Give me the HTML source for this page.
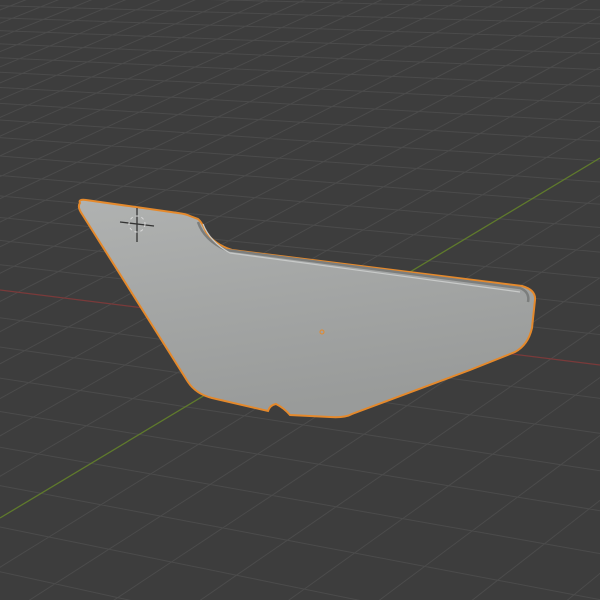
<!DOCTYPE html>
<html><head><meta charset="utf-8"><style>
html,body{margin:0;padding:0;background:#3d3d3d;width:600px;height:600px;overflow:hidden}
svg{display:block;position:absolute;left:0;top:0}
</style></head><body>
<svg id="s" width="600" height="600" viewBox="0 0 600 600" xmlns="http://www.w3.org/2000/svg">
<rect width="600" height="600" fill="#3d3d3d"/>
<g id="grid" stroke="#4b4b4b" stroke-width="1" fill="none"></g>
<line x1="0" y1="290" x2="600" y2="365" stroke="#7a3a3a" stroke-width="1.3"/>
<line x1="0" y1="518" x2="600" y2="158" stroke="#5f7a2c" stroke-width="1.3"/>
<defs>
<linearGradient id="g" x1="0" y1="0" x2="0.3" y2="1">
<stop offset="0" stop-color="#b0b2b1"/>
<stop offset="0.5" stop-color="#a4a6a5"/>
<stop offset="1" stop-color="#999b9a"/>
</linearGradient>
</defs>
<path d="M80 203 Q78 199 86 200 L178 213 Q186 214 190 216 L198 219 Q202 222 206 232 Q214 244 232 250 L522 286 Q536 290 535 300 L532 328 Q528 345 515 352 L470 370 L352 414 Q345 418 330 417 L290 415 Q284 408 276 404 Q270 405 268 411 L212 398 Q196 394 188 382 L82 214 Q77 207 80 203 Z" fill="url(#g)" stroke="#e4892c" stroke-width="2"/>
<path d="M198 222 Q204 240 226 250 L520 288 Q530 292 528 302" fill="none" stroke="#7c7e7d" stroke-width="2.5"/>
<path d="M203 224 Q210 242 230 253 L520 292" fill="none" stroke="#c8cac9" stroke-width="1.2"/>
<circle cx="322" cy="332" r="2" fill="none" stroke="#e4892c" stroke-width="1"/>
<g stroke="#333" stroke-width="1.3">
<line x1="137" y1="208" x2="137" y2="242"/>
<line x1="120" y1="222" x2="154" y2="226"/>
</g>
<circle cx="137" cy="224" r="8" fill="none" stroke="#d9d9d9" stroke-width="1" stroke-dasharray="3 3"/>
</svg>
<script>
(function(){
var O=[316,330],V1=[-3000,-85],V2=[2500,-982],s1=-0.0165,s2=0.0185;
function P(u,v){var w=1+s1*u+s2*v;var x=(O[0]+s1*u*V1[0]+s2*v*V2[0])/w;var y=(O[1]+s1*u*V1[1]+s2*v*V2[1])/w;return [x,y,w];}
var g=document.getElementById('grid'),d='';
function line(f){var pts=[];for(var t=-80;t<=80;t+=0.5){var p=f(t);if(p[2]>0.03&&Math.abs(p[0])<2000&&Math.abs(p[1])<2000)pts.push(p[0].toFixed(1)+','+p[1].toFixed(1));}if(pts.length>1)d+='M'+pts.join('L');}
for(var k=-80;k<=80;k++){if(k==0)continue;line(function(t){return P(k,t)});line(function(t){return P(t,k)});}
var p=document.createElementNS('http://www.w3.org/2000/svg','path');p.setAttribute('d',d);g.appendChild(p);
})();
</script>
</body></html>
